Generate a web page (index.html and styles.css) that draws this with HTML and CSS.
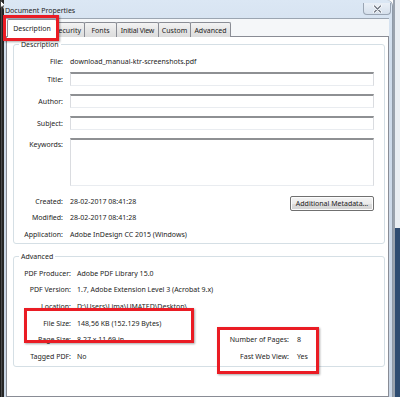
FILE: index.html
```html
<!DOCTYPE html>
<html>
<head>
<meta charset="utf-8">
<title>Document Properties</title>
<link rel="stylesheet" href="styles.css">
</head>
<body>
<div class="desk-left">
  <svg class="cursor" width="6" height="10" viewBox="0 0 6 10"><path d="M0.5 0.5 L0.5 8 L2.3 6.3 L3.6 9.3 L4.8 8.8 L3.5 5.8 L5.8 5.8 Z" fill="#fff" stroke="#222" stroke-width="0.7"/></svg>
</div>
<div class="window">
  <div class="titlebar">
    <span class="title">Document Properties</span>
    <div class="close">
      <svg width="9" height="8" viewBox="0 0 9 8"><path d="M1.5 1 L7.5 7 M7.5 1 L1.5 7" stroke="#fff" stroke-width="2.6" stroke-linecap="round"/><path d="M1.5 1 L7.5 7 M7.5 1 L1.5 7" stroke="#6d7480" stroke-width="1.2" stroke-linecap="round"/></svg>
    </div>
  </div>
  <div class="client">
    <div class="tabs">
      <div class="tab active">Description</div>
      <div class="tab t-security">Security</div>
      <div class="tab t-fonts">Fonts</div>
      <div class="tab t-initial">Initial View</div>
      <div class="tab t-custom">Custom</div>
      <div class="tab t-advanced">Advanced</div>
    </div>
    <div class="panel">
      <fieldset class="group desc">
        <legend>Description</legend>
        <div class="row file"><span class="label">File:</span><span class="value">download_manual-ktr-screenshots.pdf</span></div>
        <div class="row field"><span class="label">Title:</span><div class="input"></div></div>
        <div class="row field"><span class="label">Author:</span><div class="input"></div></div>
        <div class="row field"><span class="label">Subject:</span><div class="input"></div></div>
        <div class="row keywords"><span class="label">Keywords:</span><div class="input area"></div></div>
        <div class="dates">
          <div class="date-rows">
            <div class="row date"><span class="label">Created:</span><span class="value">28-02-2017 08:41:28</span></div>
            <div class="row date"><span class="label">Modified:</span><span class="value">28-02-2017 08:41:28</span></div>
          </div>
          <button class="btn">Additional Metadata...</button>
        </div>
        <div class="row app"><span class="label">Application:</span><span class="value">Adobe InDesign CC 2015 (Windows)</span></div>
      </fieldset>
      <fieldset class="group adv">
        <legend>Advanced</legend>
        <div class="adv-grid">
          <span class="label">PDF Producer:</span><span class="value wide">Adobe PDF Library 15.0</span>
          <span class="label">PDF Version:</span><span class="value wide">1.7, Adobe Extension Level 3 (Acrobat 9.x)</span>
          <span class="label">Location:</span><span class="value wide">D:\Users\Lima\UMATED\Desktop\</span>
          <span class="label">File Size:</span><span class="value wide">148,56 KB (152.129 Bytes)</span>
          <span class="label">Page Size:</span><span class="value">8,27 x 11,69 in</span><span class="label2">Number of Pages:</span><span class="value">8</span>
          <span class="label">Tagged PDF:</span><span class="value">No</span><span class="label2">Fast Web View:</span><span class="value">Yes</span>
        </div>
      </fieldset>
    </div>
  </div>
</div>
<div class="desk-right"></div>
<div class="mark mark-tab"></div>
<div class="mark mark-size"></div>
<div class="mark mark-pages"></div>
</body>
</html>
```
FILE: styles.css
```css
* { box-sizing: border-box; }
html, body { margin: 0; padding: 0; }
body {
  position: relative;
  width: 400px;
  height: 397px;
  overflow: hidden;
  display: flex;
  background: #fff;
  font-family: "Noto Sans", "DejaVu Sans", sans-serif;
  font-size: 7px;
  color: #1c1c1c;
}
.desk-left {
  width: 4px;
  flex: none;
  background: linear-gradient(to right, #1d1d1d 0 1px, #4d4d4d 1px 2.5px, #262626 2.5px);
}
.cursor { display: block; overflow: visible; }
.window {
  width: 389px;
  flex: none;
  display: flex;
  flex-direction: column;
  padding: 0 3px 0 2px;
  background: linear-gradient(#dbe7f4, #cfdceb 60px, #c9d6e6);
  border-right: 1px solid #8f9aa7;
  border-top-right-radius: 6px;
}
.titlebar {
  height: 18px;
  flex: none;
  display: flex;
  align-items: flex-start;
}
.title {
  margin-top: 6px;
  margin-left: -1px;
  font-size: 7px;
  color: #1e1e1e;
}
.close {
  margin-left: auto;
  margin-top: 3px;
  margin-right: -2px;
  width: 28px;
  height: 12px;
  border: 1px solid #9aa5b3;
  border-top: none;
  border-radius: 0 0 4px 4px;
  background: linear-gradient(#eaf0f7, #d6e0ec);
  display: flex;
  align-items: center;
  justify-content: center;
}
.client {
  flex: 1;
  display: flex;
  flex-direction: column;
  background: #f5f7f9;
  border-top: 1px solid #9ba5b1;
}
.tabs {
  height: 18px;
  flex: none;
  display: flex;
  align-items: flex-end;
  padding-left: 1px;
  position: relative;
  z-index: 1;
  margin-bottom: -1px;
}
.tab {
  height: 15px;
  padding: 0;
  display: flex;
  align-items: center;
  justify-content: center;
  border: 1px solid #8a8d95;
  border-bottom: none;
  border-radius: 2px 2px 0 0;
  background: linear-gradient(#f3f3f3, #e6e6e6 50%, #dcdcdc);
  margin-left: -1px;
  white-space: nowrap;
}
.tab:first-child { margin-left: 0; }
.t-security { width: 30px; justify-content: flex-end; padding-right: 3px; }
.t-fonts { width: 33px; }
.t-initial { width: 43px; letter-spacing: -0.2px; }
.t-custom { width: 33px; }
.t-advanced { width: 41px; }
.tab.active {
  height: 18px;
  width: 50px;
  background: #fff;
  margin-right: -1px;
  position: relative;
  z-index: 2;
}
.panel {
  flex: 1;
  background: #fff;
  border: 1px solid #898c95;
  padding: 3px 3px 0 6px;
}
.group {
  margin: 0;
  padding: 0;
  min-width: 0;
  border: 1px solid #d5dfe5;
  border-radius: 3px;
}
.group legend {
  margin-left: 5px;
  padding: 0 2px;
  line-height: 9px;
  font-size: 7px;
}
.row {
  display: flex;
  align-items: center;
}
.label {
  flex: none;
  text-align: right;
  white-space: nowrap;
}
.desc { padding: 5px 10px 0 0; }
.desc .label { width: 56px; padding-right: 7px; }
.row.file { height: 14px; }
.row.field { height: 14px; margin-top: 4px; }
.row.field + .row.field { margin-top: 8px; }
.row.keywords { height: 48px; margin-top: 8px; align-items: flex-start; }
.row.keywords .label { padding-top: 2px; }
.input {
  flex: 1;
  height: 14px;
  border: 1px solid;
  border-color: #8e9093 #dadce0 #e9ecf0 #dadce0;
  border-top-width: 2px;
  background: #fff;
}
.input.area { height: 48px; }
.dates {
  display: flex;
  align-items: flex-start;
  margin-top: 7px;
}
.date-rows { display: flex; flex-direction: column; }
.row.date { height: 16px; }
.btn {
  margin-left: auto;
  margin-top: 3px;
  width: 84px;
  height: 15px;
  padding: 0;
  font-family: inherit;
  font-size: 7px;
  color: #1c1c1c;
  border: 1px solid #707070;
  border-radius: 2px;
  background: linear-gradient(#f4f4f4, #ebebeb 50%, #dddddd 51%, #d3d3d3);
  box-shadow: inset 0 0 0 1px #fcfcfc;
}
.row.app { height: 18px; }
.adv {
  margin-top: 8px;
  padding: 4px 7px 1px 0;
}
.adv-grid {
  display: grid;
  grid-template-columns: 63px 1fr auto 80px;
  grid-auto-rows: 16.6px;
  align-items: center;
}
.adv-grid .label { padding-right: 6px; }
.adv-grid .label2 { text-align: right; padding-right: 8px; white-space: nowrap; }
.adv-grid .wide { grid-column: 2 / -1; }
.value { white-space: nowrap; }
.desk-right {
  flex: none;
  width: 7px;
  background: linear-gradient(#e9eef3 0 228px, #2e4c71 228px);
  box-shadow: inset 2px 0 0 #9aa3ae;
}
.mark {
  position: absolute;
  border: 3px solid #ea1c24;
  box-shadow: 1px 1px 2px rgba(0, 0, 0, 0.35);
  z-index: 10;
}
.mark-tab { left: 3px; top: 15px; width: 56px; height: 26px; }
.mark-size { left: 24px; top: 308px; width: 170px; height: 35px; }
.mark-pages { left: 217px; top: 327px; width: 102px; height: 47px; }
```
